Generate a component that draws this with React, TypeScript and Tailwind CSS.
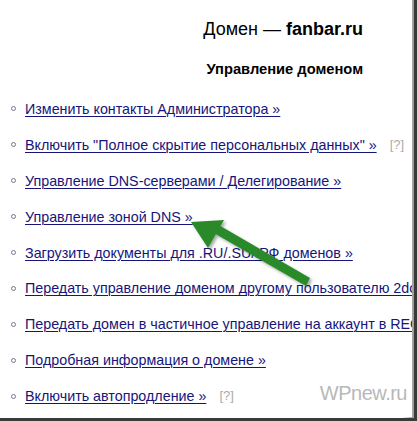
const items: { label: string; help?: boolean }[] = [
  { label: 'Изменить контакты Администратора »' },
  { label: 'Включить "Полное скрытие персональных данных" »', help: true },
  { label: 'Управление DNS-серверами / Делегирование »' },
  { label: 'Управление зоной DNS »' },
  { label: 'Загрузить документы для .RU/.SU/.РФ доменов »' },
  { label: 'Передать управление доменом другому пользователю 2domains »' },
  { label: 'Передать домен в частичное управление на аккаунт в REG.RU »' },
  { label: 'Подробная информация о домене »' },
  { label: 'Включить автопродление »', help: true },
]

function Arrow() {
  return (
    <svg
      className="pointer-events-none absolute left-0 top-0"
      width="417"
      height="421"
      viewBox="0 0 417 421"
    >
      <defs>
        <filter id="sh" x="-20%" y="-20%" width="140%" height="140%">
          <feDropShadow dx="2" dy="2" stdDeviation="1.5" floodColor="#000" floodOpacity="0.35" />
        </filter>
      </defs>
      <g filter="url(#sh)" fill="#2b8a2b">
        <polygon points="191,222 224,220 208,248" />
        <polygon points="212,232 217,224 310,278 306,286" />
      </g>
    </svg>
  )
}

export default function App() {
  return (
    <div
      className="relative h-[421px] w-[417px] overflow-hidden bg-[#3a3a3a]"
      style={{ fontFamily: '"Liberation Sans", Arial, sans-serif' }}
    >
      <div className="h-[418px] w-[414px] bg-gradient-to-r from-white from-[97%] to-[#9a9a9a]">
        <div className="h-[417px] w-[412px] overflow-hidden bg-white">
          <div className="pr-[49px] pt-[17px] text-right text-[18px] leading-[24px] text-black">
            Домен — <b>fanbar.ru</b>
          </div>
          <div className="pr-[49px] pt-[19px] text-right text-[14.7px] font-bold leading-[18px] text-black">
            Управление доменом
          </div>
          <ul className="pt-[13px]">
            {items.map((item) => (
              <li key={item.label} className="flex h-[35.9px] items-center whitespace-nowrap pl-[11px]">
                <span className="mr-[9px] h-[5px] w-[5px] shrink-0 rounded-full border border-[#6b7a8c]" />
                <a href="#" className="text-[14.3px] leading-[18px] text-[#15157a] underline decoration-1 underline-offset-2">
                  {item.label}
                </a>
                {item.help && (
                  <span className="ml-[13px] text-[13px] text-[#aaaaaa]">[?]</span>
                )}
              </li>
            ))}
          </ul>
        </div>
      </div>
      <div className="absolute right-[10px] top-[381px] text-[20px] leading-[24px] tracking-[-0.5px] text-[#b8b8b8]">
        WPnew.ru
      </div>
      <Arrow />
    </div>
  )
}
